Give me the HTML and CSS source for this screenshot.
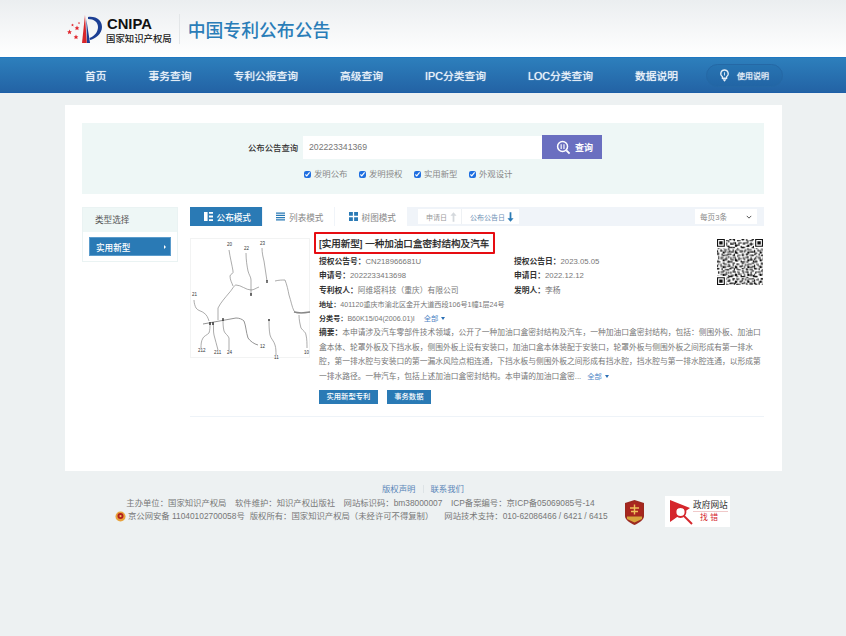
FILE: index.html
```html
<!DOCTYPE html>
<html lang="zh-CN">
<head>
<meta charset="utf-8">
<title>中国专利公布公告</title>
<link rel="stylesheet" href="styles.css">
</head>
<body>
<header class="top">
  <div class="brand">
    <svg class="logo-mark" viewBox="0 0 38 30" width="38" height="30">
      <defs><path id="star" d="M0-2.400l.7 1.700 1.700.1-1.300 1.100.5 1.800L0 1.200l-1.600 1 .5-1.800L-2.400-.6l1.700-.1z"/></defs>
      <g fill="#e0242b">
        <use href="#star" x="10" y="14"/>
        <use href="#star" x="2.500" y="18"/>
        <use href="#star" x="9" y="23"/>
        <use href="#star" transform="translate(5.500 11) scale(.6)"/>
        <use href="#star" transform="translate(12 9) scale(.5)"/>
      </g>
      <path d="M18 1l1.800 28H15z" fill="#d7262b"/>
      <path d="M19.300 5l3.700 24h-3z" fill="#1c3f94"/>
      <path d="M21 3c9-1 14 4 14 10 0 7-7 12-12 13l-.5-2c5-2 8.500-6 8.500-11 0-5-4-8-10-8z" fill="#1c3f94"/>
    </svg>
    <div class="logo-text">
      <span class="logo-en">CNIPA</span>
      <span class="logo-cn">国家知识产权局</span>
    </div>
    <span class="brand-sep"></span>
    <h1 class="site-title">中国专利公布公告</h1>
  </div>
</header>
<nav class="nav">
  <a>首页</a><a>事务查询</a><a>专利公报查询</a><a>高级查询</a><a>IPC分类查询</a><a>LOC分类查询</a><a>数据说明</a>
  <span class="help">
    <svg viewBox="0 0 12 14" width="11" height="13"><path d="M6 1a4 4 0 0 0-2.300 7.300V10h4.600V8.300A4 4 0 0 0 6 1z" fill="none" stroke="#e6eff8" stroke-width="1.400"/><path d="M3.800 11h4.400L6 13.800z" fill="#e6eff8"/><path d="M6 3.500V7" stroke="#e6eff8"/></svg>
    使用说明
  </span>
</nav>
<main class="page">
  <section class="search">
    <div class="search-row">
      <label class="search-label">公布公告查询</label>
      <div class="search-box">202223341369</div>
      <button class="search-btn">
        <svg viewBox="0 0 16 16" width="15" height="15"><circle cx="7" cy="7" r="5.300" fill="none" stroke="#fff" stroke-width="1.600"/><path d="M11 11l3.500 3.500" stroke="#fff" stroke-width="2"/><path d="M5.500 4.500v5M8.500 4.500v5" stroke="#fff" stroke-width="1.200"/></svg>
        查询
      </button>
    </div>
    <div class="checks">
      <label class="check"><input type="checkbox" checked>发明公布</label>
      <label class="check"><input type="checkbox" checked>发明授权</label>
      <label class="check"><input type="checkbox" checked>实用新型</label>
      <label class="check"><input type="checkbox" checked>外观设计</label>
    </div>
  </section>
  <div class="columns">
    <aside class="side">
      <div class="side-head">类型选择</div>
      <div class="side-body"><a class="side-btn">实用新型<i class="tri"></i></a></div>
    </aside>
    <div class="results">
      <div class="bar">
        <a class="tab tab-on">
          <svg viewBox="0 0 10 10" width="9" height="9"><path d="M0 0h4v10H0zM5.500 0H10v2H5.500zM5.500 4H10v2H5.500zM5.500 8H10v2H5.500z" fill="#fff"/></svg>公布模式</a>
        <a class="tab">
          <svg viewBox="0 0 10 10" width="9" height="9"><path d="M0 .5h10v1.500H0zM0 3h10v1.500H0zM0 5.500h10V7H0zM0 8h10v1.500H0z" fill="#2a7ab5"/></svg>列表模式</a>
        <a class="tab">
          <svg viewBox="0 0 10 10" width="9" height="9"><path d="M0 0h4.300v4.300H0zM5.700 0H10v4.300H5.700zM0 5.700h4.300V10H0zM5.700 5.700H10V10H5.700z" fill="#2a7ab5"/></svg>树图模式</a>
        <div class="sorts">
          <span class="sort">申请日<svg viewBox="0 0 8 11" width="7" height="10"><path d="M4 0l3.500 4H5v7H3V4H.5z" fill="#d5d9dd"/></svg></span>
          <span class="sort sort-on">公布公告日<svg viewBox="0 0 8 11" width="7" height="10"><path d="M4 11L.5 7H3V0h2v7h2.500z" fill="#2a7ab5"/></svg></span>
        </div>
        <div class="perpage">每页3条<svg viewBox="0 0 8 5" width="6" height="4"><path d="M1 1l3 3 3-3" fill="none" stroke="#333" stroke-width="1.100"/></svg></div>
      </div>
      <article class="item">
        <div class="thumb">
          <svg viewBox="0 0 120 120" width="120" height="120" fill="none" stroke="#888" stroke-width=".7">
            <path d="M38 11c1 7 3 15 4 21 1 3-3 3-3 5 0 4 2 7 3 10"/>
            <path d="M27 81V69c3-6 7-10 11-15 3-3 5-8 7-8 5 0 10 5 15 5 3 0 5-2 8-3"/>
            <path d="M55 14c0 7 1 13 2 18 1 4 3 6 3 9v15"/>
            <path d="M71 9c0 5 1 9 2 13 1 7 2 13 3 20"/>
            <path d="M84 42c4-1 7-1 10-1 2 5 3 10 4 15 2 6 3 12 5 16 2 2 3 2 5 2 4 0 8 0 11-1"/>
            <path d="M103 73c4 1 10 1 16 0" stroke-width="1.300"/>
            <path d="M108 76c0 5 1 9 2 13 2 3 5 4 5 7 1 4 1 9 1 13"/>
            <path d="M12 85l33-6c3 0 6 1 8 3 2 5 2 11 4 17 2 3 6 6 10 7" stroke-width=".9"/>
            <path d="M3 61c0 3 1 6 2 8 2 3 6 3 8 5 3 2 4 5 5 8"/>
            <path d="M19 84c0 4 0 7-1 10-2 2-5 3-6 5-2 3-2 7-2 10"/>
            <path d="M22 84c1 4 0 8 1 12 1 5 3 10 4 15"/>
            <path d="M32 80c0 4 0 8 1 12 1 3 4 4 5 7v12"/>
            <path d="M78 80c0 5 0 11 1 16 1 4 4 6 5 10 1 3 1 7 1 10"/>
            <path d="M60 54v3M76 41v3M78 80v2M32 79v3" stroke="#222" stroke-width="1.200"/>
            <path d="M19 83v3M22 83v3" stroke="#222" stroke-width="1.300"/>
          </svg>
          <span class="fig-label fl1">20</span><span class="fig-label fl2">22</span><span class="fig-label fl3">23</span><span class="fig-label fl4">21</span><span class="fig-label fl5">212</span><span class="fig-label fl6">211</span><span class="fig-label fl7">24</span><span class="fig-label fl8">12</span><span class="fig-label fl9">11</span><span class="fig-label fl10">10</span>
        </div>
        <div class="info">
          <h2 class="title"><span class="title-box">[实用新型] 一种加油口盒密封结构及汽车</span></h2>
          <div class="meta">
            <div class="meta-row"><span><b>授权公告号：</b>CN218966681U</span><span class="col2"><b>授权公告日：</b>2023.05.05</span></div>
            <div class="meta-row"><span><b>申请号：</b>2022233413698</span><span class="col2"><b>申请日：</b>2022.12.12</span></div>
            <div class="meta-row"><span><b>专利权人：</b>阿维塔科技（重庆）有限公司</span><span class="col2"><b>发明人：</b>李杨</span></div>
            <div class="meta-row small"><span><b>地址：</b>401120重庆市渝北区金开大道西段106号1幢1层24号</span></div>
            <div class="meta-row small"><span><b>分类号：</b>B60K15/04(2006.01)I<a class="more">全部<i class="caret"></i></a></span></div>
          </div>
          <p class="abstract"><b>摘要：</b>本申请涉及汽车零部件技术领域，公开了一种加油口盒密封结构及汽车，一种加油口盒密封结构，包括：侧围外板、加油口盒本体、轮罩外板及下挡水板，侧围外板上设有安装口，加油口盒本体装配于安装口，轮罩外板与侧围外板之间形成有第一排水腔，第一排水腔与安装口的第一漏水风险点相连通，下挡水板与侧围外板之间形成有挡水腔，挡水腔与第一排水腔连通，以形成第一排水路径。一种汽车，包括上述加油口盒密封结构。本申请的加油口盒密...<a class="more">全部<i class="caret"></i></a></p>
          <div class="actions"><a class="act">实用新型专利</a><a class="act">事务数据</a></div>
        </div>
        <div class="qr">
          <svg viewBox="0 0 41 41" width="46" height="46">
            <defs>
              <pattern id="qa" width="11" height="13" patternUnits="userSpaceOnUse"><path d="M0 0h2v1H0zM4 0h1v2H4zM7 1h3v1H7zM1 3h1v2H1zM3 3h3v1H3zM8 3h1v3H8zM5 5h2v2H5zM0 7h3v1H0zM10 6h1v2h-1zM3 9h1v2H3zM6 9h3v1H6zM0 10h1v2H0zM9 11h2v1H9zM5 11h2v2H5z" fill="#111"/></pattern>
              <pattern id="qb" width="17" height="7" patternUnits="userSpaceOnUse"><path d="M1 1h1v1H1zM5 0h2v1H5zM10 1h1v2h-1zM14 0h2v1h-2zM3 3h2v1H3zM7 3h1v2H7zM12 4h3v1h-3zM0 5h2v1H0zM9 6h2v1H9zM16 3h1v2h-1z" fill="#111"/></pattern>
            </defs>
            <rect width="41" height="41" fill="#fff"/>
            <rect width="41" height="41" fill="url(#qa)"/>
            <rect width="41" height="41" fill="url(#qb)"/>
            <path fill="#fff" d="M0 0h8v8H0zM33 0h8v8h-8zM0 33h8v8H0z"/>
            <path fill="#111" fill-rule="evenodd" d="M0 0h7v7H0zM1 1v5h5V1zM2 2h3v3H2zM34 0h7v7h-7zM35 1v5h5V1zM36 2h3v3h-3zM0 34h7v7H0zM1 35v5h5v-5zM2 36h3v3H2z"/>
          </svg>
        </div>
      </article>
    </div>
  </div>
</main>
<footer class="foot">
  <div class="foot-links"><a>版权声明</a><i class="foot-sep"></i><a>联系我们</a></div>
  <div class="foot-main">
    <div class="foot-text">
      <div class="foot-line"><span>主办单位：国家知识产权局</span><span>软件维护：知识产权出版社</span><span>网站标识码：bm38000007</span><span>ICP备案编号：京ICP备05069085号-14</span></div>
      <div class="foot-line foot-line2">
        <svg class="police" viewBox="0 0 12 12" width="11" height="11"><circle cx="6" cy="6" r="5.500" fill="#e8a33c"/><circle cx="6" cy="5.500" r="3.300" fill="#b3201f"/><circle cx="6" cy="5.500" r="1.200" fill="#f1c75b"/></svg>
        <span class="tight">京公网安备 11040102700058号</span><span class="tight">版权所有：国家知识产权局（未经许可不得复制）</span><span class="wide">网站技术支持：010-62086466 / 6421 / 6415</span>
      </div>
    </div>
    <svg class="emblem" viewBox="0 0 21 25" width="21" height="25">
      <path d="M1 3l9.500-3L20 3v13c0 4-5 7-9.500 9C6 23 1 20 1 16z" fill="#9c2a20"/>
      <path d="M2.500 4.200l8-2.500 8 2.500v11.300H2.500z" fill="#a9261f"/>
      <path d="M3 16.500h15v2.500l-7.500 3.500L3 19z" fill="#d8a23b"/>
      <path d="M6 8h9M10.500 4.500v10M7 11.500h7" stroke="#eec05a" stroke-width="1.400" fill="none"/>
    </svg>
    <div class="gov">
      <svg viewBox="0 0 28 26" width="28" height="26">
        <path d="M1 1v22L21 9z" fill="#d5262c"/>
        <circle cx="11.500" cy="13" r="5" fill="#fff" stroke="#d5262c" stroke-width="1.800"/>
        <path d="M15 17l8 8" stroke="#d5262c" stroke-width="2"/>
      </svg>
      <div class="gov-text"><span class="gov-a">政府网站</span><span class="gov-b">找错</span></div>
    </div>
  </div>
</footer>
</body>
</html>
```

FILE: styles.css
```css
* { box-sizing: border-box; }
html, body { margin: 0; padding: 0; }
body {
  background: #edf1f2;
  font-family: "Liberation Sans", "Noto Sans CJK SC", sans-serif;
  font-size: 8.5px;
  color: #777;
  height: 636px;
  overflow: hidden;
}
a { color: inherit; text-decoration: none; }
b { color: #333; font-weight: 700; }

.top { height: 57px; background: linear-gradient(#ebeef0, #fff); }
.brand { display: flex; align-items: center; height: 57px; padding-left: 67px; }
.logo-mark { flex: none; margin-top: 1px; }
.logo-text { display: flex; flex-direction: column; margin: 3px 0 0 2px; line-height: 1; }
.logo-en { font-size: 14.800px; font-weight: 700; color: #111; }
.logo-cn { font-family: "Noto Sans CJK SC", sans-serif; font-size: 9.400px; font-weight: 500; color: #222; margin: 2px 0 0 -1px; white-space: nowrap; }
.brand-sep { width: 1px; height: 30px; background: #e3e6e8; margin: 0 8px 0 7px; }
.site-title { margin: 0; font-size: 17.850px; font-weight: 500; color: #2a7db8; white-space: nowrap; }

.nav {
  height: 36px;
  display: flex;
  align-items: center;
  gap: 42px;
  padding-left: 85px;
  background: linear-gradient(#2d7fbc, #2363a5);
  border-top: 1px solid #1f78c2;
  border-bottom: 1px solid #1d5fa8;
  color: #eef4fa;
  font-size: 10.750px;
  white-space: nowrap;
  text-shadow: 0 0 1px #dfeaf5;
}
.help {
  display: flex;
  align-items: center;
  gap: 7px;
  width: 77px;
  height: 23px;
  margin-left: -14px;
  padding-left: 12px;
  border: 1px solid #2568a5;
  border-radius: 12px;
  background: rgba(20, 80, 140, .12);
  font-size: 8px;
}

.page { width: 717px; height: 366px; margin: 12px 0 0 65px; background: #fff; padding: 18px 18px 0 17px; }

.search { height: 71px; background: #eef7f6; padding-top: 12px; }
.search-row { display: flex; align-items: center; padding-left: 166px; }
.search-label { width: 55px; font-size: 8.400px; font-weight: 500; color: #333; white-space: nowrap; }
.search-box { width: 239px; height: 23px; padding-left: 6px; background: #fff; font-size: 8.700px; line-height: 23px; color: #777; }
.search-btn { display: flex; align-items: center; justify-content: center; gap: 4px; width: 60px; height: 24px; border: 0; padding: 0 0 0 5px; background: #6a6fc0; color: #fff; font: 700 9px "Liberation Sans", "Noto Sans CJK SC", sans-serif; }
.checks { display: flex; gap: 11.500px; padding: 9px 0 0 222px; }
.check { display: flex; align-items: center; gap: 3px; color: #888; font-size: 8.400px; line-height: 12px; white-space: nowrap; }
.check input { width: 7px; height: 7px; margin: 0; accent-color: #1f6fe0; }

.columns { display: flex; gap: 12px; margin-top: 13px; }
.side { width: 96px; height: 55px; border: 1px solid #eaf3f3; flex: none; }
.side-head { height: 24px; padding-left: 12px; background: #eef7f6; color: #555; font-size: 8.600px; line-height: 24px; }
.side-body { padding: 5px 6px 0; }
.side-btn { display: flex; align-items: center; justify-content: space-between; height: 19px; padding: 0 4px 0 6px; background: #2a7ab5; border: 1px solid #5b9ccc; color: #fff; font-size: 8.600px; font-weight: 500; }
.tri { width: 0; height: 0; border-left: 2.500px solid #fff; border-top: 2.500px solid transparent; border-bottom: 2.500px solid transparent; }

.results { width: 574px; flex: none; }
.bar { display: flex; align-items: center; height: 19px; background: #f0f4f9; }
.tab { display: flex; align-items: center; justify-content: center; gap: 4px; width: 72.500px; height: 19px; padding-left: 3px; background: #fff; color: #888; font-size: 8.600px; white-space: nowrap; border-right: 1px solid #f0f4f9; }
.tab-on { background: #2a7ab5; color: #fff; font-weight: 500; }
.sorts { display: flex; margin-left: 10.500px; height: 15px; background: #fff; }
.sort { display: flex; align-items: center; gap: 3px; padding: 0 4px 0 8px; color: #999; font-size: 7px; white-space: nowrap; border-right: 1px solid #eef1f4; }
.sort-on { color: #6d8fb5; gap: 2px; padding-right: 5px; border: 0; }
.perpage { display: flex; align-items: center; justify-content: space-between; width: 62px; height: 15px; margin-left: auto; margin-right: 7px; padding: 0 5px; background: #fff; color: #888; font-size: 7.600px; white-space: nowrap; }

.item { position: relative; display: flex; height: 191px; padding-top: 6px; border-bottom: 1px solid #eef3f8; }
.thumb { position: relative; width: 120px; height: 120px; margin-top: 6px; flex: none; border: 1px solid #f2f3f3; }
.thumb svg { display: block; }
.fig-label { position: absolute; font-size: 4.500px; line-height: 5px; color: #333; }
.fl1 { left: 36px; top: 3px; } .fl2 { left: 53px; top: 7px; } .fl3 { left: 69px; top: 2px; }
.fl4 { left: 1px; top: 53px; } .fl5 { left: 7px; top: 109px; } .fl6 { left: 23px; top: 111px; }
.fl7 { left: 36px; top: 111px; } .fl8 { left: 69px; top: 105px; } .fl9 { left: 83px; top: 116px; } .fl10 { left: 113px; top: 111px; }

.info { width: 443px; margin-left: 9px; flex: none; }
.title { margin: 0 0 0 -5px; height: 22px; }
.title-box { display: inline-flex; align-items: center; height: 22px; padding: 0 4px 0 3px; border: 2px solid #e60d12; border-radius: 1px; font-size: 9.550px; font-weight: 400; color: #222; white-space: nowrap; -webkit-text-stroke: .25px #222; }
.meta { margin-top: 1px; }
.meta-row { display: flex; height: 14.300px; line-height: 14.300px; font-size: 7.750px; white-space: nowrap; }
.meta-row > span:first-child { width: 195px; }
.meta-row.small { font-size: 7.100px; }
.meta-row.small > span:first-child { width: auto; }
.more { margin-left: 9px; color: #4f86c6; font-size: 7.300px; }
.caret { display: inline-block; width: 0; height: 0; margin-left: 3px; border-top: 3px solid #2a6fb5; border-left: 2.500px solid transparent; border-right: 2.500px solid transparent; vertical-align: 1px; }
.abstract { margin: 0; width: 443px; font-size: 7.760px; line-height: 14.400px; color: #777; }
.abstract .more { margin-left: 6px; }
.actions { display: flex; gap: 9px; margin-top: 6px; }
.act { display: block; height: 14px; padding: 0 6.500px; background: #2a7ab5; border: 1px solid #2a7ab5; color: #fff; font-size: 7.300px; line-height: 12px; font-weight: 500; white-space: nowrap; }
.qr { position: absolute; right: 1px; top: 13px; }
.qr svg { display: block; }

.foot { padding-top: 12px; }
.foot-links { display: flex; justify-content: center; gap: 7px; height: 12px; line-height: 12px; color: #5b86b8; font-size: 8.400px; }
.foot-sep { width: 1px; height: 8px; margin-top: 2px; background: #dde3e6; }
.foot-main { display: flex; align-items: flex-start; margin-left: 115px; }
.foot-text { width: 491px; flex: none; margin-top: 2px; }
.foot-line { display: flex; justify-content: center; gap: 8.500px; height: 13px; line-height: 13px; font-size: 8.350px; color: #777; white-space: nowrap; }
.foot-line2 { justify-content: flex-start; gap: 5px; align-items: center; }
.police { flex: none; margin-right: -4px; }
.foot-line2 .tight:first-of-type { margin-left: 1px; }
.foot-line2 .wide { margin-left: 6px; }
.emblem { flex: none; margin: 5px 0 0 18px; }
.gov { display: flex; align-items: center; width: 65px; height: 31px; margin: 1px 0 0 20px; padding-left: 4px; background: #fff; flex: none; }
.gov-text { display: flex; flex-direction: column; align-items: center; margin-left: -4px; line-height: 11px; }
.gov-a { font-size: 8.700px; color: #333; white-space: nowrap; }
.gov-b { font-size: 7.800px; color: #d5262c; letter-spacing: 2.500px; border-top: 1px solid #f0c9c9; width: 100%; text-align: center; }
```
